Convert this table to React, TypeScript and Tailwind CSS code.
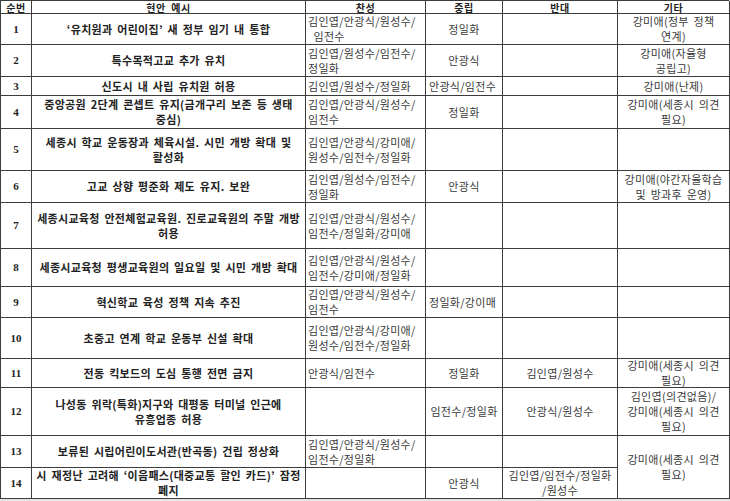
const rows: {
  no: string;
  issue: string[];
  yes: string[];
  neutral: string[];
  no2: string[];
  etc?: string[];
}[] = [
  { no: '1', issue: ["‘유치원과 어린이집’ 새 정부 임기 내 통합"], yes: ['김인엽/안광식/원성수/', '\u00a0\u00a0임전수'], neutral: ['정일화'], no2: [], etc: ['강미애(정부 정책', '연계)'] },
  { no: '2', issue: ['특수목적고교 추가 유치'], yes: ['김인엽/원성수/임전수/', '정일화'], neutral: ['안광식'], no2: [], etc: ['강미애(자율형', '공립고)'] },
  { no: '3', issue: ['신도시 내 사립 유치원 허용'], yes: ['김인엽/원성수/정일화'], neutral: ['안광식/임전수'], no2: [], etc: ['강미애(난제)'] },
  { no: '4', issue: ['중앙공원 2단계 콘셉트 유지(금개구리 보존 등 생태', '중심)'], yes: ['김인엽/안광식/원성수/', '임전수'], neutral: ['정일화'], no2: [], etc: ['강미애(세종시 의견', '필요)'] },
  { no: '5', issue: ['세종시 학교 운동장과 체육시설. 시민 개방 확대 및', '활성화'], yes: ['김인엽/안광식/강미애/', '원성수/임전수/정일화'], neutral: [], no2: [], etc: [] },
  { no: '6', issue: ['고교 상향 평준화 제도 유지. 보완'], yes: ['김인엽/원성수/임전수/', '정일화'], neutral: ['안광식'], no2: [], etc: ['강미애(야간자율학습', '및 방과후 운영)'] },
  { no: '7', issue: ['세종시교육청 안전체험교육원. 진로교육원의 주말 개방', '허용'], yes: ['김인엽/안광식/원성수/', '임전수/정일화/강미애'], neutral: [], no2: [], etc: [] },
  { no: '8', issue: ['세종시교육청 평생교육원의 일요일 및 시민 개방 확대'], yes: ['김인엽/안광식/원성수/', '임전수/강미애/정일화'], neutral: [], no2: [], etc: [] },
  { no: '9', issue: ['혁신학교 육성 정책 지속 추진'], yes: ['김인엽/안광식/원성수/', '임전수'], neutral: ['정일화/강이매'], no2: [], etc: [] },
  { no: '10', issue: ['초중고 연계 학교 운동부 신설 확대'], yes: ['김인엽/안광식/강미애/', '원성수/임전수/정일화'], neutral: [], no2: [], etc: [] },
  { no: '11', issue: ['전동 킥보드의 도심 통행 전면 금지'], yes: ['안광식/임전수'], neutral: ['정일화'], no2: ['김인엽/원성수'], etc: ['강미애(세종시 의견', '필요)'] },
  { no: '12', issue: ['나성동 위락(특화)지구와 대평동 터미널 인근에', '유흥업종 허용'], yes: [], neutral: ['임전수/정일화'], no2: ['안광식/원성수'], etc: ['김인엽(의견없음)/', '강미애(세종시 의견', '필요)'] },
  { no: '13', issue: ['보류된 시립어린이도서관(반곡동) 건립 정상화'], yes: ['김인엽/안광식/원성수/', '임전수/정일화'], neutral: [], no2: [], etc: ['강미애(세종시 의견', '필요)'] },
  { no: '14', issue: ["시 재정난 고려해 ‘이음패스(대중교통 할인 카드)’ 잠정", '폐지'], yes: [], neutral: ['안광식'], no2: ['김인엽/임전수/정일화', '/원성수'] },
];

const cell = 'border-r border-b border-[#3c3c3c] flex flex-col justify-center overflow-visible';

const Lines = ({ lines }: { lines: string[] }) => (
  <>
    {lines.map((l, i) => (
      <span key={i} className="whitespace-pre">{l}</span>
    ))}
  </>
);

export default function App() {
  return (
    <div
      className="w-[730px] h-[501px] bg-[#e6e6e6] overflow-hidden"
      style={{ fontFamily: '"Noto Sans CJK KR", "Noto Sans", sans-serif' }}
    >
      <div
        className="grid w-[729px] bg-white border-l border-t border-[#3c3c3c] text-[11px] text-[#3a3a3a]
          grid-cols-[31px_274px_120px_77px_115px_112px]
          grid-rows-[13px_31px_32px_19px_33px_42px_32px_46px_38px_31px_41px_29px_48px_32px_31px]"
      >
        {['순번', '현안 예시', '찬성', '중립', '반대', '기타'].map((h) => (
          <div key={h} className={`${cell} items-center font-bold text-[10px] leading-[11px] tracking-[0.5px] text-[#222] [word-spacing:3px]`}>
            {h}
          </div>
        ))}

        {rows.map((r) => (
          <div key={r.no} className="contents">
            <div className={`${cell} items-center font-bold text-[#222]`} style={{ fontFamily: '"Liberation Serif", serif' }}>
              {r.no}
            </div>
            <div className={`${cell} items-center text-center font-bold leading-[15px] text-[#222] tracking-[0.3px] [word-spacing:2px]`}>
              <Lines lines={r.issue} />
            </div>
            <div className={`${cell} items-start pl-[2px] leading-[15px] tracking-[0.3px]`}>
              <Lines lines={r.yes} />
            </div>
            <div className={`${cell} ${r.no === '3' || r.no === '9' ? 'items-start pl-[3px]' : 'items-center'} leading-[15px] tracking-[0.3px]`}>
              <Lines lines={r.neutral} />
            </div>
            <div className={`${cell} items-center leading-[15px] tracking-[0.3px]`}>
              <Lines lines={r.no2} />
            </div>
            {r.etc && (
              <div className={`${cell} items-center text-center leading-[15px] tracking-[0.3px] [word-spacing:2px] ${r.no === '13' ? 'row-span-2' : ''}`}>
                <Lines lines={r.etc} />
              </div>
            )}
          </div>
        ))}
      </div>
    </div>
  );
}
